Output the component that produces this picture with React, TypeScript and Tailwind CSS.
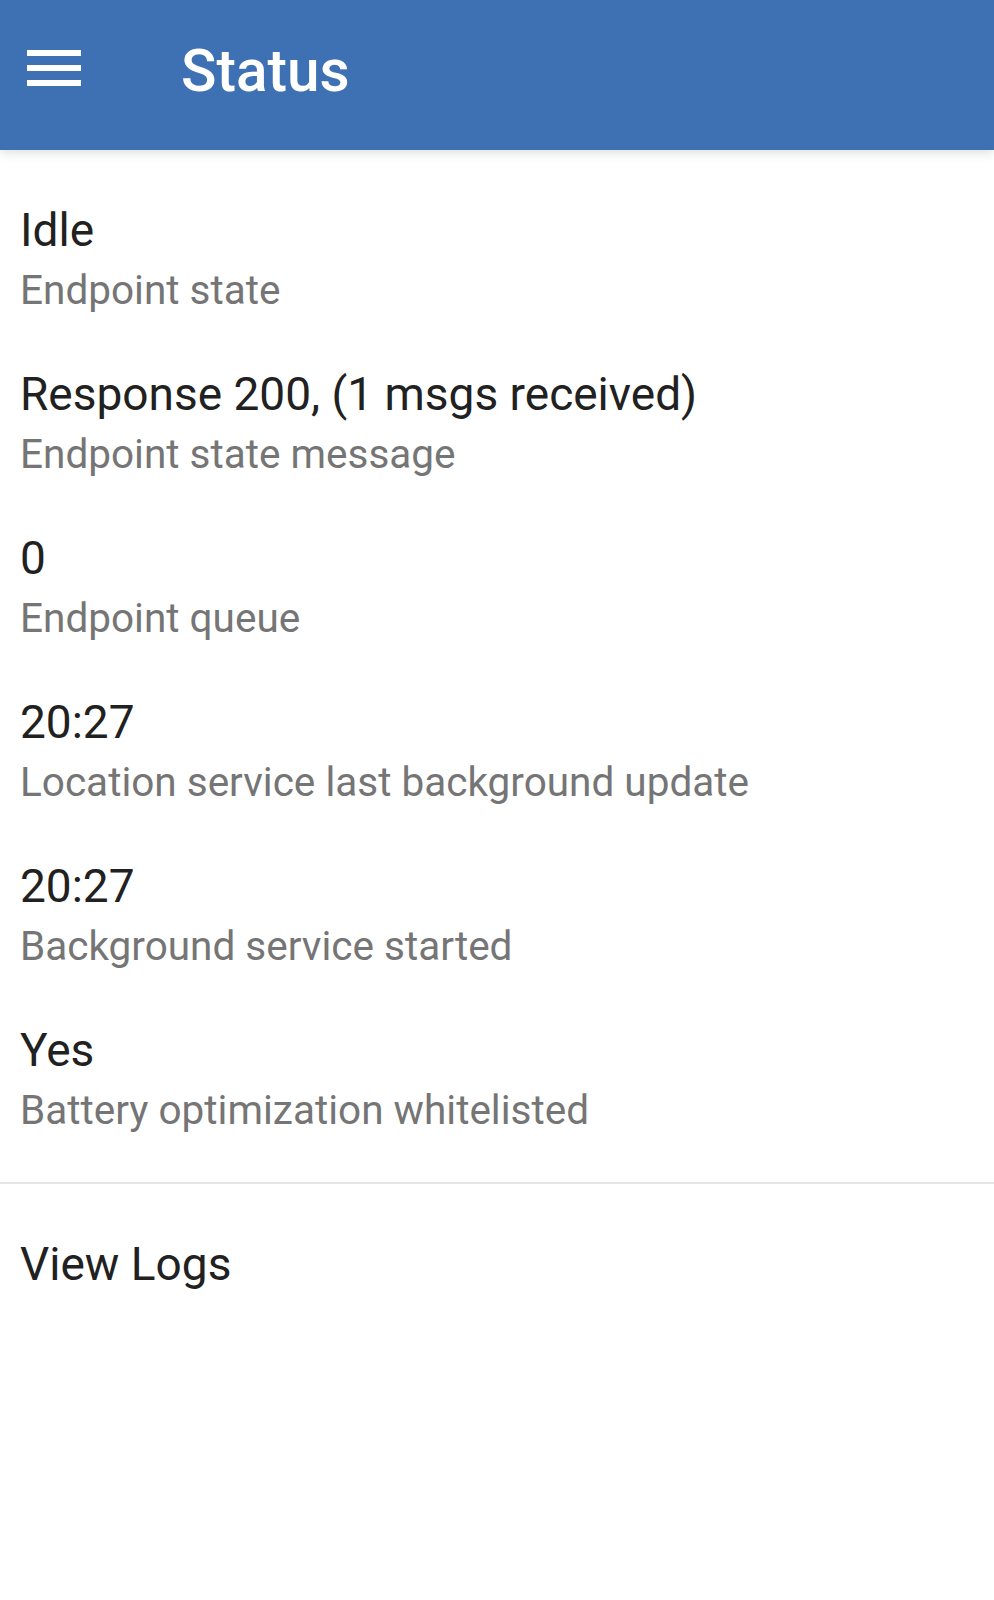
import React from "react";

const items = [
  { value: "Idle", label: "Endpoint state" },
  { value: "Response 200, (1 msgs received)", label: "Endpoint state message" },
  { value: "0", label: "Endpoint queue" },
  { value: "20:27", label: "Location service last background update" },
  { value: "20:27", label: "Background service started" },
  { value: "Yes", label: "Battery optimization whitelisted" },
];

const App = () => {
  return (
    <div className="min-h-[1600px] w-full bg-white font-['Roboto',sans-serif]">
      {/* Toolbar */}
      <div className="relative z-10 flex h-[150px] items-start bg-[#3e71b4] shadow-[0_3px_10px_rgba(0,0,0,0.13)]">
        <div className="ml-[27px] mt-[50px] flex w-[54px] flex-col gap-[9px]">
          <span className="block h-[6px] bg-white" />
          <span className="block h-[6px] bg-white" />
          <span className="block h-[6px] bg-white" />
        </div>
        <h1 className="ml-[100px] pt-[38px] text-[58.5px] font-medium leading-[66px] text-white">Status</h1>
      </div>

      {/* Status list */}
      <div className="pt-[27px] pb-[21px]">
        {items.map((item, i) => (
          <div key={i} className="px-[20px] pt-[25px] pb-[22px]">
            <div className="text-[46px] leading-[56px] text-[#212121]">{item.value}</div>
            <div className="mt-[3px] text-[40.5px] leading-[58px] text-[#757575]">{item.label}</div>
          </div>
        ))}
      </div>

      <div className="h-[2px] bg-[#e6e6e6]" />

      <div className="px-[20px] pt-[52px]">
        <div className="text-[46px] leading-[56px] text-[#212121]">View Logs</div>
      </div>
    </div>
  );
};

export default App;
